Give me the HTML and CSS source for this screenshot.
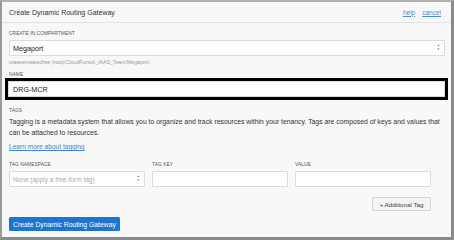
FILE: index.html
```html
<!DOCTYPE html>
<html>
<head>
<meta charset="utf-8">
<link rel="stylesheet" href="styles.css">
</head>
<body>
<div class="dialog">
  <div class="header">
    <span class="title">Create Dynamic Routing Gateway</span>
    <span class="links"><a href="#">help</a><a href="#">cancel</a></span>
  </div>
  <div class="content">
    <div class="label">CREATE IN COMPARTMENT</div>
    <div class="select">
      <span>Megaport</span>
      <span class="arrows">&#9650;<br>&#9660;</span>
    </div>
    <div class="path">oraseemeatechse (root)/CloudPursuit_IAAS_Team/Megaport</div>
    <div class="label name-label">NAME</div>
    <div class="input focused">DRG-MCR</div>
    <div class="label tags-label">TAGS</div>
    <p class="desc">Tagging is a metadata system that allows you to organize and track resources within your tenancy. Tags are composed of keys and values that can be attached to resources.</p>
    <a class="learn" href="#">Learn more about tagging</a>
    <div class="tag-grid">
      <div class="label">TAG NAMESPACE</div>
      <div class="label">TAG KEY</div>
      <div class="label">VALUE</div>
      <div class="select small"><span class="ph">None (apply a free-form tag)</span><span class="arrows">&#9650;<br>&#9660;</span></div>
      <div class="input small"></div>
      <div class="input small"></div>
    </div>
    <div class="add-row"><span class="add-btn">+ Additional Tag</span></div>
    <div class="primary">Create Dynamic Routing Gateway</div>
  </div>
</div>
</body>
</html>
```
FILE: styles.css
```css
html, body { margin: 0; padding: 0; }
body { width: 454px; height: 240px; font-family: "Liberation Sans", Arial, sans-serif; color: #333; }
.dialog {
  box-sizing: border-box; width: 454px; height: 240px;
  background: #f8f8f8;
  border-left: 2px solid #9a9a9a; border-top: 2px solid #b0b0b0;
  border-right: 3px solid #8a8a8a; border-bottom: 3px solid #8a8a8a;
}
.header {
  height: 20px; display: flex; align-items: center; justify-content: space-between;
  padding: 0 10px 0 7px; border-bottom: 1px solid #e2e2e2;
}
.title { font-size: 7px; color: #333; }
.links { display: flex; gap: 7px; font-size: 6.5px; }
.links a { color: #4a90d9; }
.content { padding: 8px 6px 0 7px; }
.label { font-size: 4.8px; line-height: 6px; color: #555; letter-spacing: 0.1px; }
.select, .input {
  box-sizing: border-box; height: 16px; background: #fff; border: 1px solid #dcdcdc;
  display: flex; align-items: center; justify-content: space-between; padding: 0 4px 0 3px;
  font-size: 7.2px; color: #222;
}
.select { margin-top: 3px; width: 436px; border-radius: 1px; }
.arrows { font-size: 3.2px; line-height: 3.6px; color: #777; text-align: center; }
.path { font-size: 5.2px; line-height: 6px; color: #9a9a9a; margin-top: 3px; }
.name-label { margin-top: 7px; }
.input.focused { width: 437px; margin-top: 3px; margin-left: -1px; outline: 3px solid #000; height: 16px; padding-left: 4px; }
.tags-label { margin-top: 11px; }
.desc { margin: 3px 0 0; font-size: 6.85px; line-height: 10.5px; color: #333; width: 436px; }
.learn { display: block; margin-top: 4px; font-size: 6.6px; line-height: 10px; color: #3a85d6; }
.tag-grid { display: grid; grid-template-columns: 136px 136px 136px; column-gap: 7px; row-gap: 3px; margin-top: 10px; }
.select.small, .input.small { width: 136px; margin-top: 0; height: 16px; border-radius: 1px; }
.ph { color: #aaa; font-size: 6.5px; }
.add-row { display: flex; justify-content: flex-end; width: 422px; margin-top: 10px; }
.add-btn {
  box-sizing: border-box; width: 59px; height: 14px; border: 1px solid #d4d4d4; background: #f3f3f3;
  font-size: 6.2px; color: #444; display: flex; align-items: center; justify-content: center; border-radius: 1px;
}
.primary {
  box-sizing: border-box; width: 111px; height: 14px; margin-top: 6px; background: #1f74cf; color: #fff;
  font-size: 6.8px; display: flex; align-items: center; justify-content: center; border-radius: 1.5px;
}
```
